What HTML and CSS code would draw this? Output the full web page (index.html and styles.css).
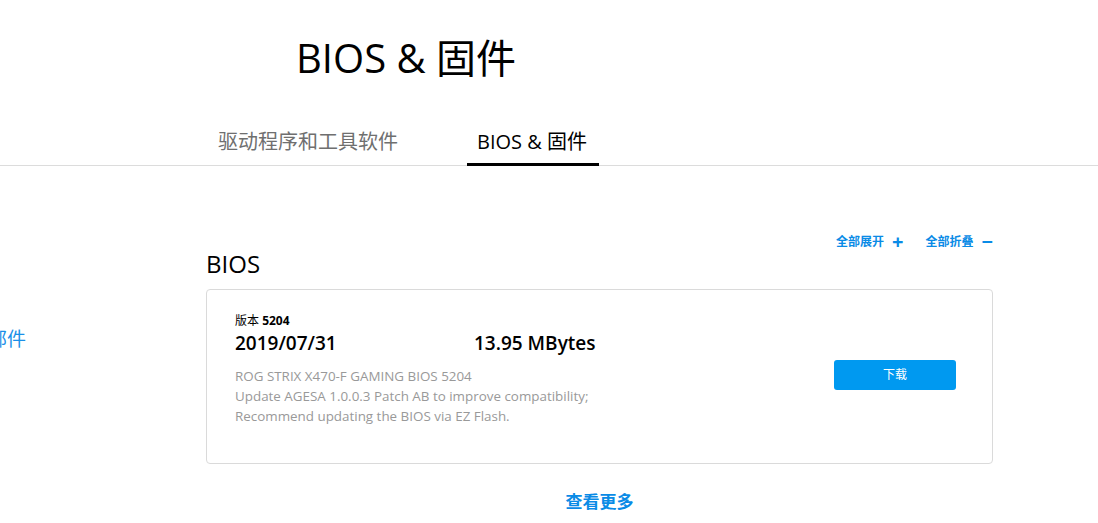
FILE: index.html
```html
<!DOCTYPE html>
<html lang="zh-CN">
<head>
<meta charset="utf-8">
<title>BIOS &amp; 固件</title>
<link rel="stylesheet" href="styles.css">
</head>
<body>
<header class="page-head">
  <h1 class="page-title">BIOS &amp; 固件</h1>
  <nav class="tabs">
    <a class="tab">驱动程序和工具软件</a>
    <a class="tab tab-active">BIOS &amp; 固件</a>
  </nav>
</header>
<main class="layout">
  <aside class="sidebar">
    <a class="side-link">部件</a>
  </aside>
  <section class="content">
    <div class="toolbar">
      <a class="tool-link">全部展开 <span class="tool-icon">+</span></a>
      <a class="tool-link">全部折叠 <span class="tool-icon">−</span></a>
    </div>
    <h2 class="section-title">BIOS</h2>
    <div class="card">
      <div class="card-info">
        <div class="version">版本 <b>5204</b></div>
        <div class="meta">
          <span class="date">2019/07/31</span>
          <span class="size">13.95 MBytes</span>
        </div>
        <div class="desc">
          ROG STRIX X470-F GAMING BIOS 5204<br>
          Update AGESA 1.0.0.3 Patch AB to improve compatibility;<br>
          Recommend updating the BIOS via EZ Flash.
        </div>
      </div>
      <a class="btn-download">下载</a>
    </div>
    <div class="more-wrap"><a class="more">查看更多</a></div>
  </section>
</main>
</body>
</html>
```
FILE: styles.css
```css
* { box-sizing: border-box; }
html, body { margin: 0; padding: 0; background: #fff; }
body {
  font-family: "Open Sans", "Noto Sans CJK SC", sans-serif;
  color: #000;
  width: 1098px;
  height: 523px;
  overflow: hidden;
}
a { text-decoration: none; cursor: pointer; }

.page-head {
  border-bottom: 1px solid #dcdcdc;
}
.page-title {
  margin: 0;
  padding: 31px 0 0 296px;
  font-size: 40px;
  font-weight: 400;
  line-height: 54px;
  height: 111px;
}
.tabs {
  display: flex;
  padding-left: 188px;
  gap: 39px;
}
.tab {
  display: block;
  font-size: 20px;
  line-height: 28px;
  padding: 17px 30px 6px;
  color: #6f6f6f;
  border-bottom: 3px solid transparent;
}
.tab-active {
  color: #000;
  padding: 17px 12px 6px 10px;
  border-bottom-color: #000;
  margin-bottom: -1px;
}

.layout {
  display: flex;
}
.sidebar {
  width: 206px;
  flex: none;
  padding-top: 161px;
}
.side-link {
  display: block;
  margin-left: -12px;
  font-size: 19px;
  line-height: 24px;
  color: #1a8fe8;
}
.content {
  width: 787px;
  padding-top: 65px;
}
.toolbar {
  display: flex;
  justify-content: flex-end;
  gap: 22px;
  height: 22px;
}
.tool-link {
  font-size: 12px;
  font-weight: 600;
  color: #0a8be6;
  line-height: 22px;
  display: flex;
  align-items: center;
  gap: 8px;
}
.tool-icon {
  font-size: 20px;
  font-weight: 700;
  line-height: 22px;
}
.section-title {
  margin: -5px 0 0;
  font-size: 24px;
  font-weight: 400;
  line-height: 32px;
  height: 41px;
}
.card {
  border: 1px solid #dadada;
  border-radius: 4px;
  height: 175px;
  display: flex;
  justify-content: space-between;
  align-items: flex-start;
  padding: 21px 36px 0 28px;
}
.version {
  font-size: 12px;
  line-height: 19px;
}
.version b { font-weight: 700; }
.meta {
  display: flex;
  font-size: 19px;
  font-weight: 600;
  line-height: 26px;
}
.date { width: 239px; }
.desc {
  margin-top: 10px;
  font-size: 13.4px;
  line-height: 20px;
  color: #999;
}
.btn-download {
  margin-top: 49px;
  width: 122px;
  height: 30px;
  border-radius: 3px;
  background: #0099f0;
  color: #fff;
  font-size: 12px;
  line-height: 30px;
  text-align: center;
}
.more-wrap {
  text-align: center;
  padding-top: 26px;
}
.more {
  font-size: 17px;
  font-weight: 600;
  color: #0a8be6;
  line-height: 24px;
}
```
